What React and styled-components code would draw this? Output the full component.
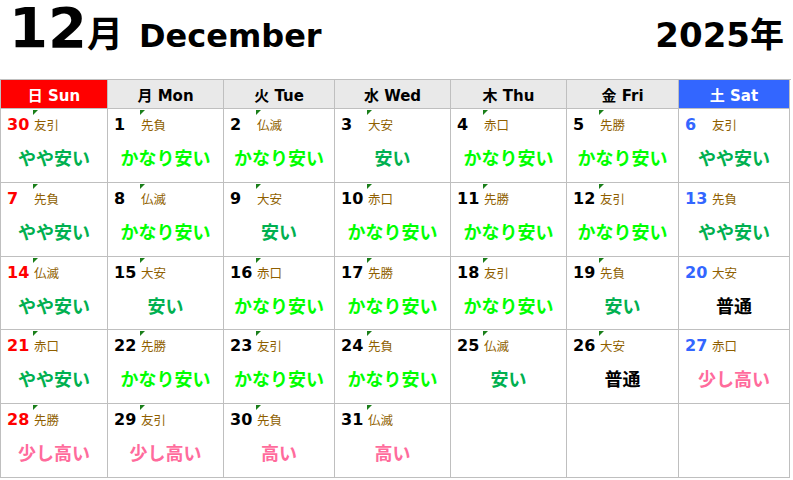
import React from 'react';
import styled, { createGlobalStyle } from 'styled-components';

const GlobalStyle = createGlobalStyle`
  body {
    margin: 0;
    background: #fff;
    font-family: "DejaVu Sans", "Noto Sans CJK JP", sans-serif;
  }
`;

const Page = styled.div`
  width: 793px;
`;

const TitleBar = styled.div`
  height: 79px;
  display: flex;
  align-items: flex-start;
  justify-content: space-between;
  padding: 0 9px 0 9px;
  box-sizing: border-box;
  line-height: 1.15;
`;

const Title = styled.div`
  display: flex;
  align-items: baseline;
  margin-top: -4px;
  font-weight: bold;
`;

const BigNum = styled.span`
  font-size: 56px;
`;

const Unit = styled.span`
  font-size: 36px;
  margin-right: 16px;
`;

const MonthName = styled.span`
  font-size: 32px;
`;

const Year = styled.div`
  font-size: 34px;
  font-weight: bold;
  padding-top: 16px;
`;

const Grid = styled.div`
  display: grid;
  grid-template-columns: 107px 116px 111px 116px 116px 112px 111px;
  grid-template-rows: 29px 74px 74px 73px 74px 74px;
  border-top: 1px solid #bfbfbf;
  border-left: 1px solid #bfbfbf;
  width: 790px;
`;

const HeadCell = styled.div`
  border-right: 1px solid #bfbfbf;
  border-bottom: 1px solid #bfbfbf;
  display: flex;
  align-items: center;
  justify-content: center;
  font-size: 15px;
  font-weight: bold;
  background: ${(p) => p.bg};
  color: ${(p) => p.fg};
`;

const DayCell = styled.div`
  border-right: 1px solid #bfbfbf;
  border-bottom: 1px solid #bfbfbf;
  display: flex;
  flex-direction: column;
`;

const TopLine = styled.div`
  display: grid;
  grid-template-columns: 32px auto;
  align-items: baseline;
  padding-top: 6px;
  height: 20px;
`;

const DayNum = styled.span`
  padding-left: 6px;
  font-size: 16px;
  font-weight: bold;
  line-height: 20px;
  color: ${(p) => p.color};
`;

const Rokuyo = styled.span`
  position: relative;
  padding-left: 1px;
  font-size: 12.5px;
  color: #8f5f00;
  line-height: 20px;
`;

const Marker = styled.span`
  position: absolute;
  left: 0;
  top: -6px;
  width: 0;
  height: 0;
  border-top: 5px solid #1a7f1a;
  border-right: 5px solid transparent;
`;

const Price = styled.div`
  margin-top: 12px;
  text-align: center;
  font-size: 18px;
  font-weight: bold;
  line-height: 24px;
  color: ${(p) => p.color};
`;

const priceColors = {
  'やや安い': '#00b050',
  'かなり安い': '#00ff00',
  '安い': '#00b050',
  '普通': '#000000',
  '少し高い': '#ff6b9c',
  '高い': '#ff6b9c',
};

const headers = [
  { label: '日 Sun', bg: '#ff0000', fg: '#fff' },
  { label: '月 Mon', bg: '#e9e9e9', fg: '#000' },
  { label: '火 Tue', bg: '#e9e9e9', fg: '#000' },
  { label: '水 Wed', bg: '#e9e9e9', fg: '#000' },
  { label: '木 Thu', bg: '#e9e9e9', fg: '#000' },
  { label: '金 Fri', bg: '#e9e9e9', fg: '#000' },
  { label: '土 Sat', bg: '#3366ff', fg: '#fff' },
];

const days = [
  [30, '友引', 'やや安い'], [1, '先負', 'かなり安い'], [2, '仏滅', 'かなり安い'], [3, '大安', '安い'],
  [4, '赤口', 'かなり安い'], [5, '先勝', 'かなり安い'], [6, '友引', 'やや安い'],
  [7, '先負', 'やや安い'], [8, '仏滅', 'かなり安い'], [9, '大安', '安い'], [10, '赤口', 'かなり安い'],
  [11, '先勝', 'かなり安い'], [12, '友引', 'かなり安い'], [13, '先負', 'やや安い'],
  [14, '仏滅', 'やや安い'], [15, '大安', '安い'], [16, '赤口', 'かなり安い'], [17, '先勝', 'かなり安い'],
  [18, '友引', 'かなり安い'], [19, '先負', '安い'], [20, '大安', '普通'],
  [21, '赤口', 'やや安い'], [22, '先勝', 'かなり安い'], [23, '友引', 'かなり安い'], [24, '先負', 'かなり安い'],
  [25, '仏滅', '安い'], [26, '大安', '普通'], [27, '赤口', '少し高い'],
  [28, '先勝', '少し高い'], [29, '友引', '少し高い'], [30, '先負', '高い'], [31, '仏滅', '高い'],
  null, null, null,
];

const numColor = (col) => (col === 0 ? '#ff0000' : col === 6 ? '#3366ff' : '#000');

export default function App() {
  return (
    <Page>
      <GlobalStyle />
      <TitleBar>
        <Title>
          <BigNum>12</BigNum>
          <Unit>月</Unit>
          <MonthName>December</MonthName>
        </Title>
        <Year>2025年</Year>
      </TitleBar>
      <Grid>
        {headers.map((h) => (
          <HeadCell key={h.label} bg={h.bg} fg={h.fg}>{h.label}</HeadCell>
        ))}
        {days.map((d, i) => {
          const col = i % 7;
          if (!d) return <DayCell key={i} />;
          const [num, rokuyo, price] = d;
          return (
            <DayCell key={i}>
              <TopLine>
                <DayNum color={numColor(col)}>{num}</DayNum>
                <Rokuyo>
                  {col !== 6 && <Marker />}
                  {rokuyo}
                </Rokuyo>
              </TopLine>
              <Price color={priceColors[price]}>{price}</Price>
            </DayCell>
          );
        })}
      </Grid>
    </Page>
  );
}
